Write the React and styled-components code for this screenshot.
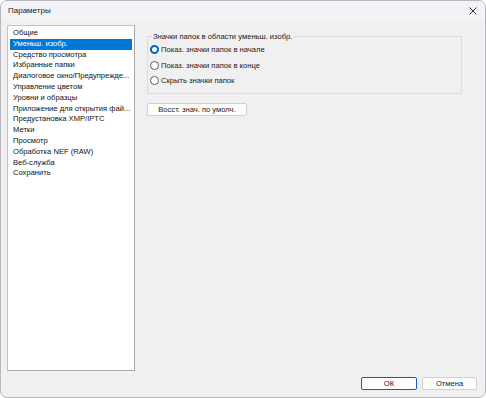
import styled, { createGlobalStyle } from "styled-components";

const GlobalStyle = createGlobalStyle`
  html, body {
    margin: 0;
    padding: 0;
    background: #ffffff;
  }
  * {
    box-sizing: border-box;
  }
`;

const pages = [
  "Общие",
  "Уменьш. изобр.",
  "Средство просмотра",
  "Избранные папки",
  "Диалоговое окно/Предупрежде...",
  "Управление цветом",
  "Уровни и образцы",
  "Приложение для открытия фай...",
  "Предустановка XMP/IPTC",
  "Метки",
  "Просмотр",
  "Обработка NEF (RAW)",
  "Веб-служба",
  "Сохранить",
];

const options = [
  { label: "Показ. значки папок в начале", checked: true },
  { label: "Показ. значки папок в конце", checked: false },
  { label: "Скрыть значки папок", checked: false },
];

const Window = styled.div`
  width: 486px;
  height: 398px;
  display: flex;
  flex-direction: column;
  border: 1px solid #b9b9bd;
  border-radius: 7px;
  overflow: hidden;
  background: #f0f0f0;
  font-family: "Liberation Sans", Arial, sans-serif;
  font-size: 7.6px;
  color: #1a1a1a;
`;

const TitleBar = styled.div`
  height: 20px;
  display: flex;
  align-items: center;
  justify-content: space-between;
  padding: 0 6px 0 7px;
  background: #f3f3f7;
  font-size: 8px;
  color: #222;
`;

const CloseIcon = styled.svg`
  width: 8px;
  height: 8px;
  margin-right: 2px;
`;

const Body = styled.div`
  flex: 1;
  display: flex;
  flex-direction: column;
  padding: 5px 8px 7px 6px;
`;

const Content = styled.div`
  flex: 1;
  display: flex;
  gap: 12px;
`;

const PageList = styled.ul`
  width: 128px;
  height: 346px;
  margin: 0;
  padding: 2px 2px;
  list-style: none;
  background: #ffffff;
  border: 1px solid #c4c4c4;
  border-right-color: #a9a9a9;
  border-bottom-color: #a9a9a9;
`;

const PageItem = styled.li`
  height: 10.8px;
  line-height: 10.8px;
  padding-left: 3px;
  white-space: nowrap;
  overflow: hidden;
  background: ${({ $active }) => ($active ? "#0078d7" : "transparent")};
  color: ${({ $active }) => ($active ? "#ffffff" : "#111")};
`;

const Panel = styled.div`
  flex: 1;
  display: flex;
  flex-direction: column;
  align-items: flex-start;
  padding-top: 7px;
  padding-right: 15px;
`;

const GroupBox = styled.fieldset`
  width: 100%;
  height: 62px;
  margin: 0;
  padding: 1px 0 0 2px;
  border: 1px solid #dcdcdc;
  display: flex;
  flex-direction: column;
`;

const Legend = styled.legend`
  padding: 0 1px;
  margin-left: 2px;
  line-height: 9px;
`;

const RadioRow = styled.label`
  display: flex;
  align-items: center;
  gap: 2px;
  height: 15.5px;
`;

const RadioDot = styled.span`
  width: 9px;
  height: 9px;
  border-radius: 50%;
  border: ${({ $checked }) => ($checked ? "2.5px solid #0067c0" : "1px solid #5c5c5c")};
  background: #ffffff;
`;

const Button = styled.button`
  height: 13px;
  padding: 0;
  font-family: inherit;
  font-size: 7.6px;
  line-height: 11px;
  color: #1a1a1a;
  background: #fdfdfd;
  border: 1px solid ${({ $primary }) => ($primary ? "#0067c0" : "#d0d0d0")};
  border-radius: 2px;
  width: ${({ $width }) => $width}px;
`;

const RestoreButton = styled(Button)`
  margin-top: 9px;
`;

const Footer = styled.div`
  display: flex;
  justify-content: flex-end;
  gap: 5px;
  padding-top: 6px;
`;

export default function App() {
  return (
    <>
      <GlobalStyle />
      <Window>
        <TitleBar>
          <span>Параметры</span>
          <CloseIcon viewBox="0 0 8 8">
            <path d="M0.5 0.5 L7.5 7.5 M7.5 0.5 L0.5 7.5" stroke="#333" strokeWidth="1" />
          </CloseIcon>
        </TitleBar>
        <Body>
          <Content>
            <PageList>
              {pages.map((page, i) => (
                <PageItem key={page} $active={i === 1}>
                  {page}
                </PageItem>
              ))}
            </PageList>
            <Panel>
              <GroupBox>
                <Legend>Значки папок в области уменьш. изобр.</Legend>
                {options.map(({ label, checked }) => (
                  <RadioRow key={label}>
                    <RadioDot $checked={checked} />
                    {label}
                  </RadioRow>
                ))}
              </GroupBox>
              <RestoreButton $width={100}>Восст. знач. по умолч.</RestoreButton>
            </Panel>
          </Content>
          <Footer>
            <Button $primary $width={56}>ОК</Button>
            <Button $width={55}>Отмена</Button>
          </Footer>
        </Body>
      </Window>
    </>
  );
}
